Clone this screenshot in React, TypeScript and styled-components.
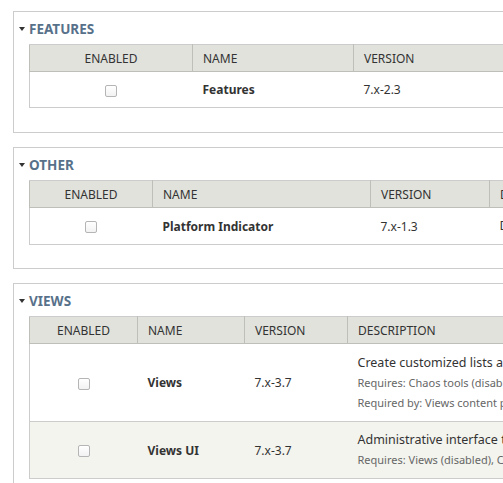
import styled, { createGlobalStyle } from 'styled-components';

const GlobalStyle = createGlobalStyle`
  html, body {
    margin: 0;
    padding: 0;
    background: #ffffff;
  }
  body {
    font-family: "Noto Sans", "DejaVu Sans", sans-serif;
    font-size: 12px;
    color: #333333;
    overflow: hidden;
  }
`;

type Column = { label: string; width: number };

type Module = {
  name: string;
  version: string;
  description?: string;
  notes?: string[];
  height: number;
};

type Group = {
  title: string;
  columns: Column[];
  modules: Module[];
  top: number;
  bottom: number;
};

const groups: Group[] = [
  {
    title: 'Features',
    columns: [
      { label: 'Enabled', width: 163 },
      { label: 'Name', width: 161 },
      { label: 'Version', width: 200 },
    ],
    modules: [{ name: 'Features', version: '7.x-2.3', height: 36 }],
    top: 11,
    bottom: 24,
  },
  {
    title: 'Other',
    columns: [
      { label: 'Enabled', width: 123 },
      { label: 'Name', width: 218 },
      { label: 'Version', width: 119 },
      { label: 'Description', width: 220 },
    ],
    modules: [
      {
        name: 'Platform Indicator',
        version: '7.x-1.3',
        description: 'Displays the platform',
        height: 37,
      },
    ],
    top: 14,
    bottom: 23,
  },
  {
    title: 'Views',
    columns: [
      { label: 'Enabled', width: 108 },
      { label: 'Name', width: 107 },
      { label: 'Version', width: 103 },
      { label: 'Description', width: 340 },
    ],
    modules: [
      {
        name: 'Views',
        version: '7.x-3.7',
        description: 'Create customized lists and queries from your database.',
        notes: [
          'Requires: Chaos tools (disabled)',
          'Required by: Views content panes (disabled)',
        ],
        height: 78,
      },
      {
        name: 'Views UI',
        version: '7.x-3.7',
        description: 'Administrative interface to views.',
        notes: ['Requires: Views (disabled), Chaos tools (disabled)'],
        height: 57,
      },
    ],
    top: 14,
    bottom: 20,
  },
];

export default function App() {
  return (
    <>
      <GlobalStyle />
      <Page>
        {groups.map((group) => (
          <Fieldset key={group.title} $top={group.top} $bottom={group.bottom}>
            <Legend>
              <Arrow />
              {group.title}
            </Legend>
            <Table>
              <colgroup>
                {group.columns.map((col) => (
                  <col key={col.label} style={{ width: col.width }} />
                ))}
              </colgroup>
              <thead>
                <tr>
                  {group.columns.map((col, i) => (
                    <Th key={col.label} $center={i === 0}>
                      {col.label}
                    </Th>
                  ))}
                </tr>
              </thead>
              <tbody>
                {group.modules.map((mod, i) => (
                  <Row key={mod.name} $even={i % 2 === 1} $height={mod.height}>
                    <CheckCell>
                      <Checkbox />
                    </CheckCell>
                    <NameCell>{mod.name}</NameCell>
                    <Td>{mod.version}</Td>
                    {group.columns.length > 3 && (
                      <Td>
                        <Description>{mod.description}</Description>
                        {mod.notes?.map((note) => (
                          <Note key={note}>{note}</Note>
                        ))}
                      </Td>
                    )}
                  </Row>
                ))}
              </tbody>
            </Table>
          </Fieldset>
        ))}
      </Page>
    </>
  );
}

const Page = styled.main`
  width: 503px;
  height: 483px;
  overflow: hidden;
  padding: 0 0 0 13px;
  box-sizing: border-box;
  display: flex;
  flex-direction: column;
`;

const Fieldset = styled.section<{ $top: number; $bottom: number }>`
  width: 900px;
  flex-shrink: 0;
  margin-top: ${(p) => p.$top}px;
  border: 1px solid #cccccc;
  padding: 10px 15px ${(p) => p.$bottom}px 15px;
  box-sizing: border-box;
`;

const Legend = styled.div`
  display: flex;
  align-items: center;
  gap: 4px;
  margin-left: -10px;
  height: 14px;
  font-size: 13.5px;
  font-weight: 700;
  text-transform: uppercase;
  color: #58718a;
  margin-bottom: 8px;
`;

const Arrow = styled.span`
  width: 0;
  height: 0;
  border-left: 3.5px solid transparent;
  border-right: 3.5px solid transparent;
  border-top: 4px solid #333333;
`;

const Table = styled.table`
  border-collapse: collapse;
  table-layout: fixed;
  border: 1px solid #cccccc;
`;

const Th = styled.th<{ $center: boolean }>`
  height: 26px;
  padding: 0 10px;
  background: #e1e2dc;
  border: 1px solid #bebfb9;
  border-top: 1px solid #cccccc;
  font-weight: 400;
  font-size: 12px;
  text-transform: uppercase;
  text-align: ${(p) => (p.$center ? 'center' : 'left')};
  color: #333333;
  white-space: nowrap;
  overflow: hidden;
`;

const Row = styled.tr<{ $even: boolean; $height: number }>`
  height: ${(p) => p.$height}px;
  background: ${(p) => (p.$even ? '#f3f4ee' : '#ffffff')};
  border-bottom: 1px solid #cccccc;
`;

const Td = styled.td`
  padding: 0 10px;
  vertical-align: middle;
  white-space: nowrap;
  overflow: hidden;
  font-size: 12px;
`;

const CheckCell = styled(Td)`
  text-align: center;
`;

const NameCell = styled(Td)`
  font-weight: 700;
`;

const Checkbox = styled.span`
  display: inline-block;
  width: 10px;
  height: 10px;
  border: 1px solid #b5b5b5;
  border-radius: 2px;
  background: linear-gradient(#ffffff, #f2f2f2);
  vertical-align: middle;
`;

const Description = styled.div`
  font-size: 12.5px;
  line-height: 20px;
`;

const Note = styled.div`
  font-size: 11px;
  line-height: 20px;
  color: #666666;
`;
